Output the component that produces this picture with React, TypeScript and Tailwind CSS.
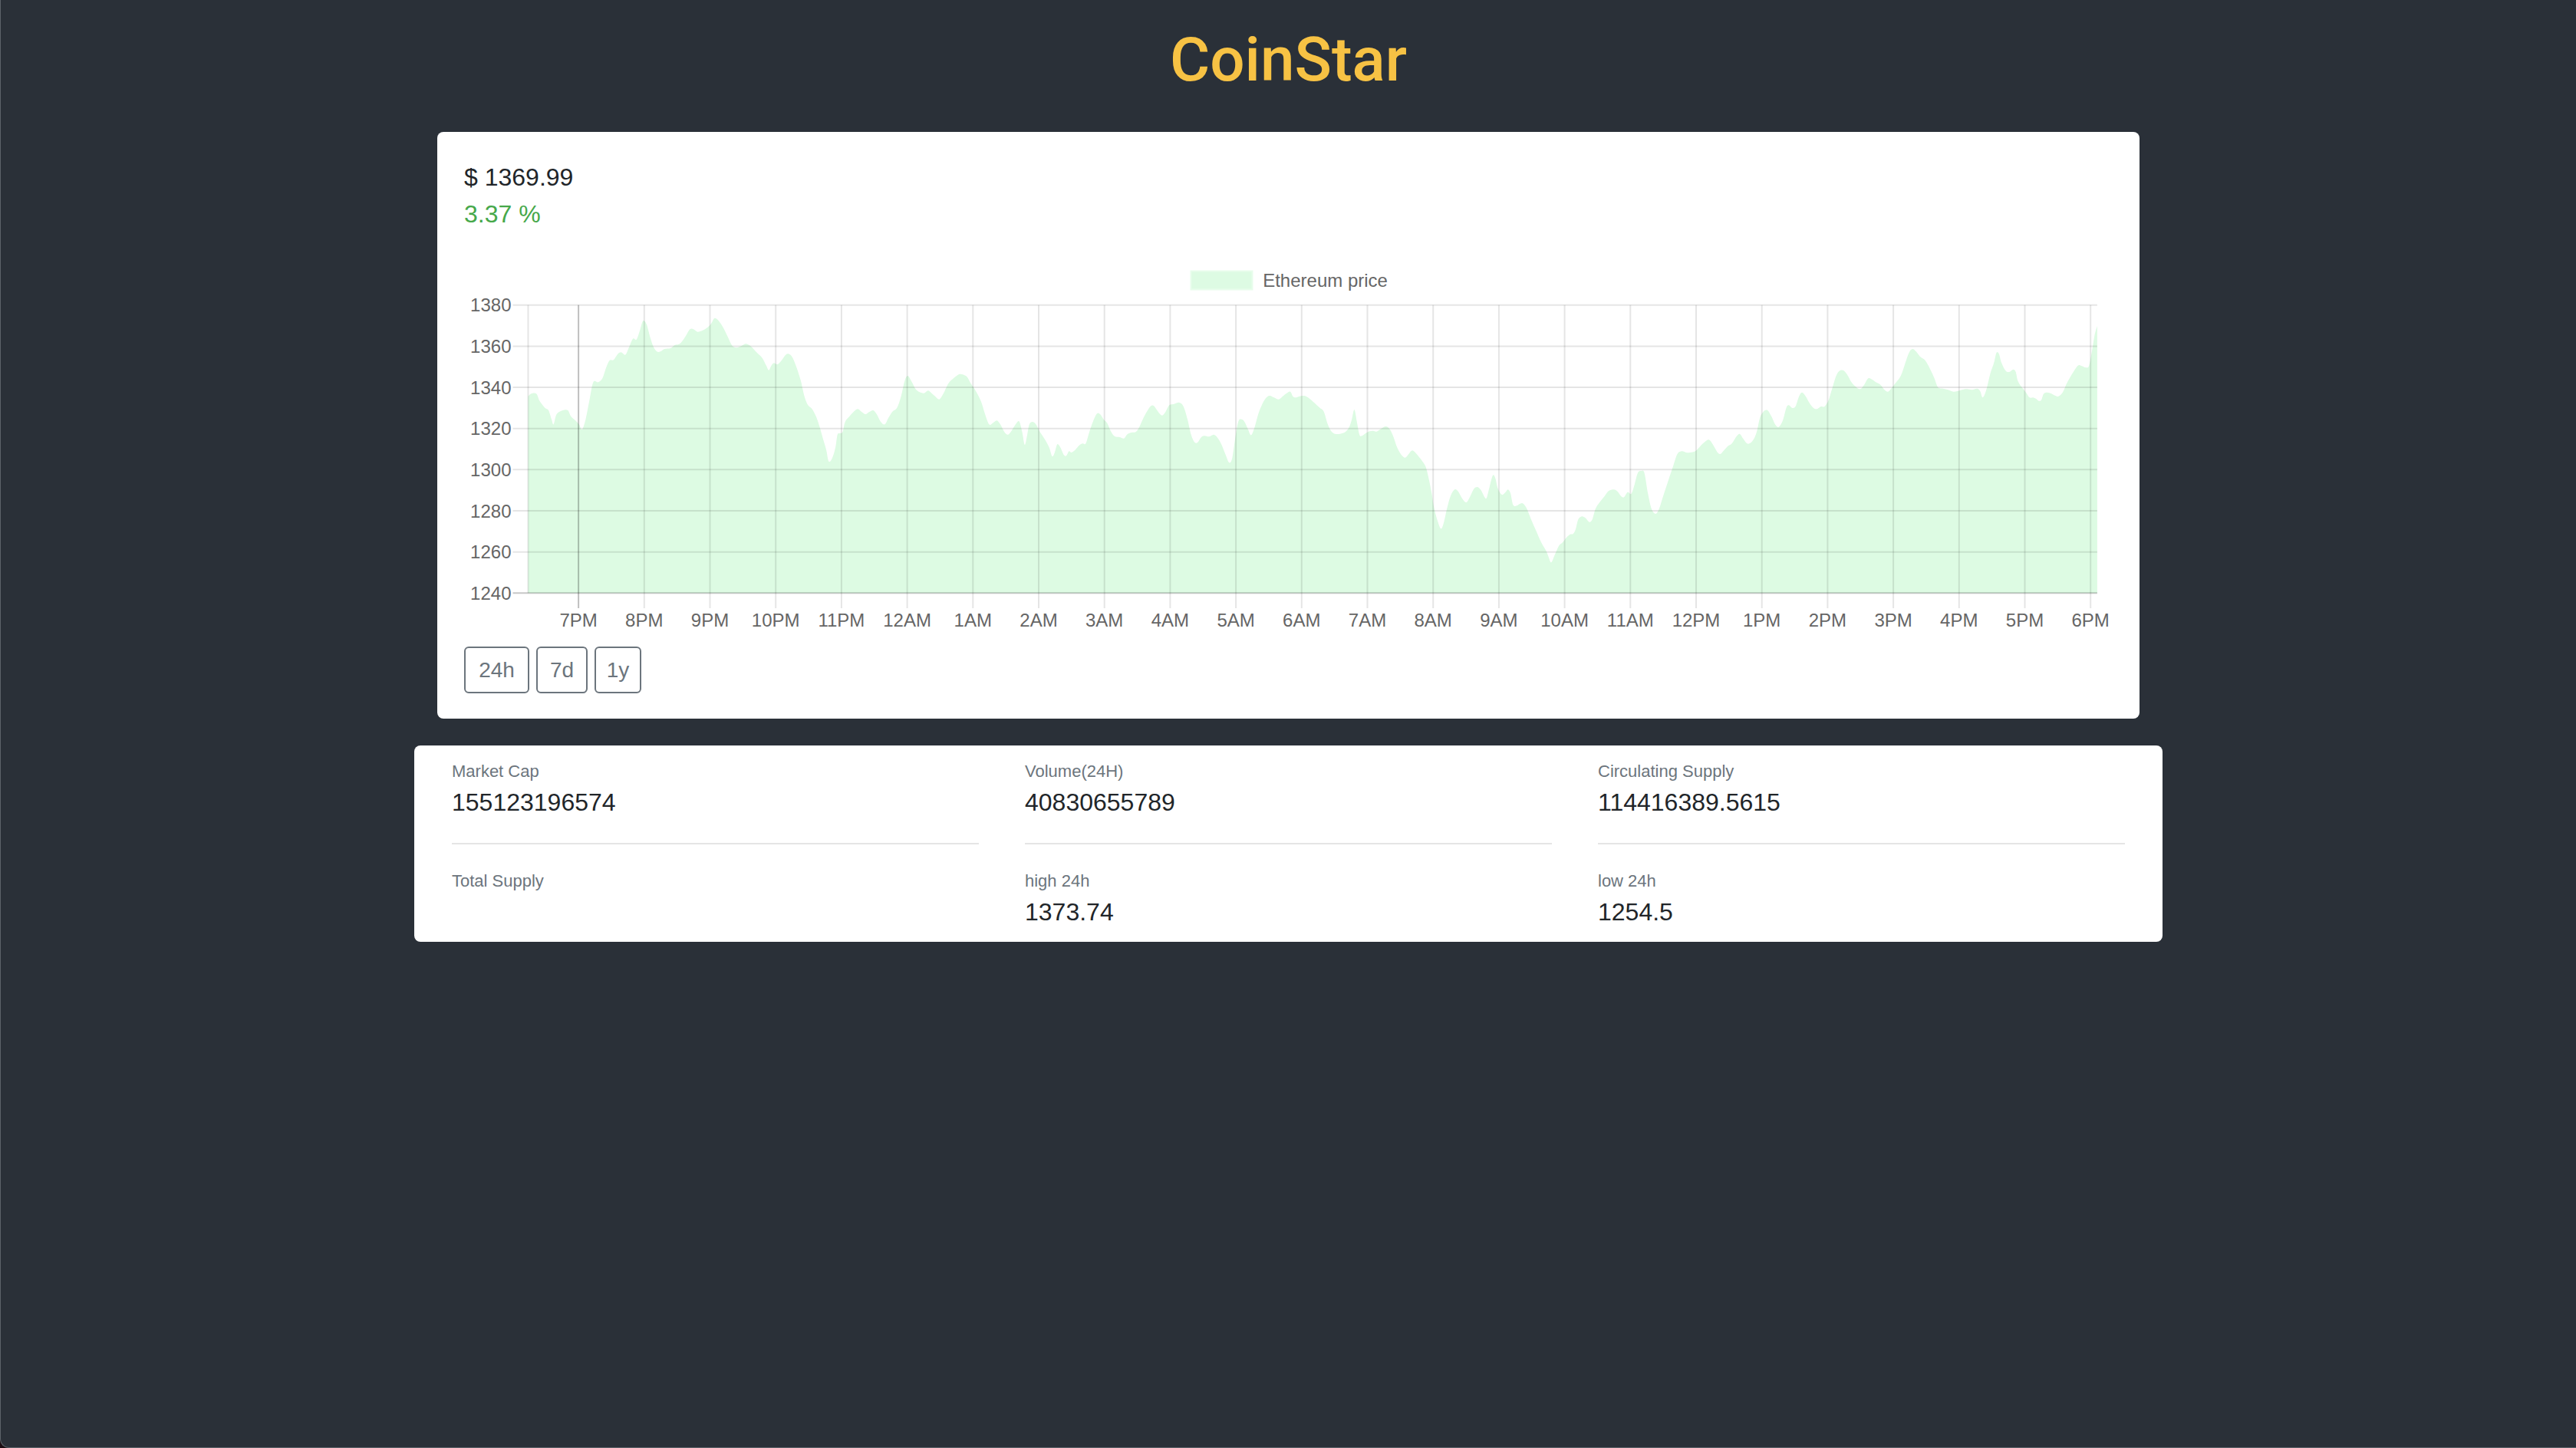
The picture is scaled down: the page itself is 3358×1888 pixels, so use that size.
import React from 'react';

const FIRST_HALF = `12,380 18,370 28,370 35,400 45,425 52,435 58,470 62,490 68,450 80,435 90,435 96,458 105,475 112,490 118,510 125,470 132,400 140,325 150,325 158,310 165,270 172,240 180,238 188,215 195,208 203,218 210,190 218,155 225,158 232,120 238,85 245,100 252,150 258,185 265,205 272,205 280,195 292,192 300,180 310,175 320,150 330,118 337,118 345,128 355,122 365,110 372,95 378,75 385,82 395,110 405,150 413,182 422,190 432,182 440,175 450,185 462,210 472,230 480,260 485,278 490,260 495,250 502,255 510,240 518,218 525,215 532,230 540,270 548,320 555,380 562,415 570,430 578,460 585,500 592,550 598,590 603,635 610,620 616,580 620,530 625,525 630,520 635,480 643,460 652,440 660,430 667,440 675,450 682,442 690,435 697,450 705,480 713,490 720,465 728,440 737,425 745,380 752,320 758,300 765,320 773,350 780,362 790,368 798,358 805,368 812,380 820,392 828,370 838,330 848,310 858,295 866,295 875,305 882,330 892,360 902,400 910,450 918,490 925,485 933,475 940,490 948,520 955,530 962,515 970,490 977,478 983,520 988,570 993,530 997,490 1003,480 1010,490 1018,520 1028,550 1036,580 1042,615 1047,600 1052,568 1058,580 1065,610 1070,612 1075,595 1080,600 1087,590 1095,572 1102,565 1108,565 1115,520 1122,480 1130,448 1136,450 1143,470 1150,485 1158,520 1165,537 1175,540 1183,545 1190,528 1198,522 1206,520 1212,505 1220,470 1228,440 1236,418 1242,418 1250,440 1258,455 1265,440 1272,415 1282,410 1292,405 1300,420 1308,470 1315,530 1322,560 1328,560 1335,540 1342,535 1350,538 1360,530 1368,545 1375,570 1383,610 1390,640 1396,620 1402,540 1408,478 1414,470 1420,480 1427,510 1433,532 1440,500 1447,450 1455,410 1463,385 1470,378 1478,385 1487,392 1495,380 1503,368 1510,362 1515,380 1520,385 1528,380 1537,378 1545,385 1555,402 1568,425`;

const SECOND_HALF = `38,440 45,485 52,515 60,527 70,527 80,520 88,500 93,470 98,432 103,480 108,530 113,535 120,525 128,517 135,515 142,518 150,508 160,498 168,510 175,540 182,580 190,608 198,620 205,605 212,592 220,605 230,630 238,655 244,700 250,760 255,820 262,870 268,898 273,880 280,820 287,770 295,745 302,752 310,780 318,795 326,770 333,742 340,735 347,748 354,775 358,778 363,740 370,690 375,700 380,740 388,765 395,755 400,745 405,760 410,805 417,808 424,800 430,800 437,820 445,860 455,905 465,950 475,985 480,1010 485,1030 492,1000 500,965 508,950 515,932 522,920 528,918 533,900 538,862 545,850 552,856 560,872 566,860 572,820 580,795 590,770 598,750 608,745 615,752 622,770 628,775 635,755 642,762 648,730 655,680 662,672 668,680 675,760 682,820 690,840 697,820 705,770 715,710 725,650 733,605 742,595 750,600 758,600 768,595 778,575 787,558 795,550 803,570 812,600 818,605 825,590 832,575 840,565 848,540 855,527 862,545 870,565 878,560 885,540 890,510 895,465 902,440 910,435 918,460 925,490 932,500 940,475 947,425 952,415 958,425 965,420 972,380 978,365 985,380 992,405 1000,425 1007,430 1015,420 1022,420 1030,395 1037,350 1045,300 1052,280 1060,280 1068,300 1075,325 1083,342 1092,352 1100,335 1108,310 1116,315 1123,325 1132,335 1140,355 1147,362 1155,345 1163,325 1172,300 1180,255 1188,210 1195,195 1202,205 1210,225 1220,240 1230,275 1238,310 1245,345 1255,350 1265,355 1275,362 1283,360 1292,355 1302,352 1312,355 1322,350 1328,360 1333,385 1340,355 1348,290 1355,250 1360,210 1365,215 1370,250 1378,280 1385,285 1393,275 1398,285 1402,320 1410,345 1418,365 1425,385 1432,385 1438,390 1443,398 1448,395 1453,370 1460,365 1468,370 1476,378 1482,380 1490,365 1498,330 1508,295 1516,270 1522,258 1528,262 1536,268 1542,260 1548,200 1553,140 1558,105`;

const PLOT_TOP = 397.8;
const PLOT_BOTTOM = 773.3;
const PLOT_LEFT = 688;
const PLOT_RIGHT = 2733.4;
const ROW = (PLOT_BOTTOM - PLOT_TOP) / 7;
const HOUR = 85.7;
const FIRST_TICK = 753.6;

const parse = (raw: string, ox: number): [number, number][] =>
  raw
    .trim()
    .split(/\s+/)
    .map((p) => {
      const [a, b] = p.split(',').map(Number);
      return [ox + a / 1.5077, 390 + b / 3] as [number, number];
    });

const points = [...parse(FIRST_HALF, 680), ...parse(SECOND_HALF, 1700)];

// catmull-rom -> bezier so the area looks like chart.js' tension curve
const buildArea = (pts: [number, number][]) => {
  let d = `M${pts[0][0].toFixed(1)},${pts[0][1].toFixed(1)}`;
  for (let i = 0; i < pts.length - 1; i++) {
    const p0 = pts[i - 1] || pts[i];
    const p1 = pts[i];
    const p2 = pts[i + 1];
    const p3 = pts[i + 2] || p2;
    const c1x = p1[0] + (p2[0] - p0[0]) / 6;
    const c1y = p1[1] + (p2[1] - p0[1]) / 6;
    const c2x = p2[0] - (p3[0] - p1[0]) / 6;
    const c2y = p2[1] - (p3[1] - p1[1]) / 6;
    d += ` C${c1x.toFixed(1)},${c1y.toFixed(1)} ${c2x.toFixed(1)},${c2y.toFixed(1)} ${p2[0].toFixed(1)},${p2[1].toFixed(1)}`;
  }
  d += ` L${PLOT_RIGHT},${PLOT_BOTTOM} L${PLOT_LEFT},${PLOT_BOTTOM} Z`;
  return d;
};

const yLabels = ['1380', '1360', '1340', '1320', '1300', '1280', '1260', '1240'];
const xLabels = [
  '7PM', '8PM', '9PM', '10PM', '11PM', '12AM', '1AM', '2AM', '3AM', '4AM', '5AM', '6AM',
  '7AM', '8AM', '9AM', '10AM', '11AM', '12PM', '1PM', '2PM', '3PM', '4PM', '5PM', '6PM',
];

const PriceChart: React.FC = () => {
  const area = buildArea(points);
  return (
    <svg
      width={2149}
      height={527}
      viewBox="604.5 303 2149 527"
      className="block"
      fontFamily="'Liberation Sans', Arial, sans-serif"
    >
      {/* legend */}
      <rect x={1552} y={353.5} width={80} height={24} fill="#ddfbe3" stroke="#e8fdec" strokeWidth={2} />
      <text x={1645.7} y={374} fontSize={24} fill="#666">
        Ethereum price
      </text>

      <path d={area} fill="#ddfbe3" />

      {/* horizontal grid + y ticks */}
      {yLabels.map((label, i) => {
        const y = PLOT_TOP + i * ROW;
        return (
          <g key={label}>
            <line
              x1={668}
              x2={PLOT_RIGHT}
              y1={y}
              y2={y}
              stroke={i === 7 ? 'rgba(0,0,0,0.22)' : 'rgba(0,0,0,0.1)'}
              strokeWidth={2}
            />
            <text x={666} y={y + 8.6} fontSize={24} fill="#666" textAnchor="end">
              {label}
            </text>
          </g>
        );
      })}

      {/* y axis border */}
      <line x1={PLOT_LEFT} x2={PLOT_LEFT} y1={PLOT_TOP} y2={PLOT_BOTTOM} stroke="rgba(0,0,0,0.1)" strokeWidth={2} />

      {/* vertical grid + x ticks */}
      {xLabels.map((label, i) => {
        const x = FIRST_TICK + i * HOUR;
        return (
          <g key={label}>
            <line
              x1={x}
              x2={x}
              y1={PLOT_TOP}
              y2={793}
              stroke={i === 0 ? 'rgba(0,0,0,0.25)' : 'rgba(0,0,0,0.1)'}
              strokeWidth={2}
            />
            <text x={x} y={817} fontSize={24} fill="#666" textAnchor="middle">
              {label}
            </text>
          </g>
        );
      })}
    </svg>
  );
};

const stats = [
  { label: 'Market Cap', value: '155123196574' },
  { label: 'Volume(24H)', value: '40830655789' },
  { label: 'Circulating Supply', value: '114416389.5615' },
  { label: 'Total Supply', value: '' },
  { label: 'high 24h', value: '1373.74' },
  { label: 'low 24h', value: '1254.5' },
];

export default function App() {
  return (
    <div className="min-h-screen bg-[#1b0d12]">
      <div className="min-h-screen rounded-bl-[12px] border-b border-l border-[#5d6369] bg-[#2a3038] pt-[30px] font-['Liberation_Sans',Arial,sans-serif]">
        <h1 className="text-center font-['Roboto',sans-serif] text-[80px] font-medium leading-[96px] text-[#f7c244]">
          CoinStar
        </h1>

        {/* chart card */}
        <div className="mx-auto mt-[46px] w-[2219px] rounded-[8px] bg-white px-[35px] pt-[35px] pb-[33px]">
          <div className="text-[32px] leading-[48px] text-[#212529]">$ 1369.99</div>
          <div className="text-[32px] leading-[48px] text-[#46a84a]">3.37 %</div>
          <PriceChart />
          <div className="mt-[13px] flex gap-[9px]">
            {['24h', '7d', '1y'].map((range, i) => (
              <button
                key={range}
                className={`flex h-[61px] items-center justify-center rounded-[6px] border-2 border-[#6c757d] text-[28px] text-[#6c757d] ${
                  i === 0 ? 'w-[85px]' : i === 1 ? 'w-[67px]' : 'w-[61px]'
                }`}
              >
                {range}
              </button>
            ))}
          </div>
        </div>

        {/* stats card */}
        <div className="mx-auto mt-[35px] w-[2279px] rounded-[8px] bg-white px-[49px] pt-[17px] pb-[15px]">
          <div className="grid grid-cols-3 gap-x-[60px]">
            {stats.map((s, i) => (
              <div key={s.label}>
                <div className="text-[22px] leading-[33px] text-[#6c757d]">{s.label}</div>
                <div className="min-h-[48px] text-[32px] leading-[48px] text-[#212529]">{s.value}</div>
                {i < 3 && <div className="mt-[29px] mb-[31px] h-[2px] bg-[#e5e5e5]" />}
              </div>
            ))}
          </div>
        </div>
      </div>
    </div>
  );
}
